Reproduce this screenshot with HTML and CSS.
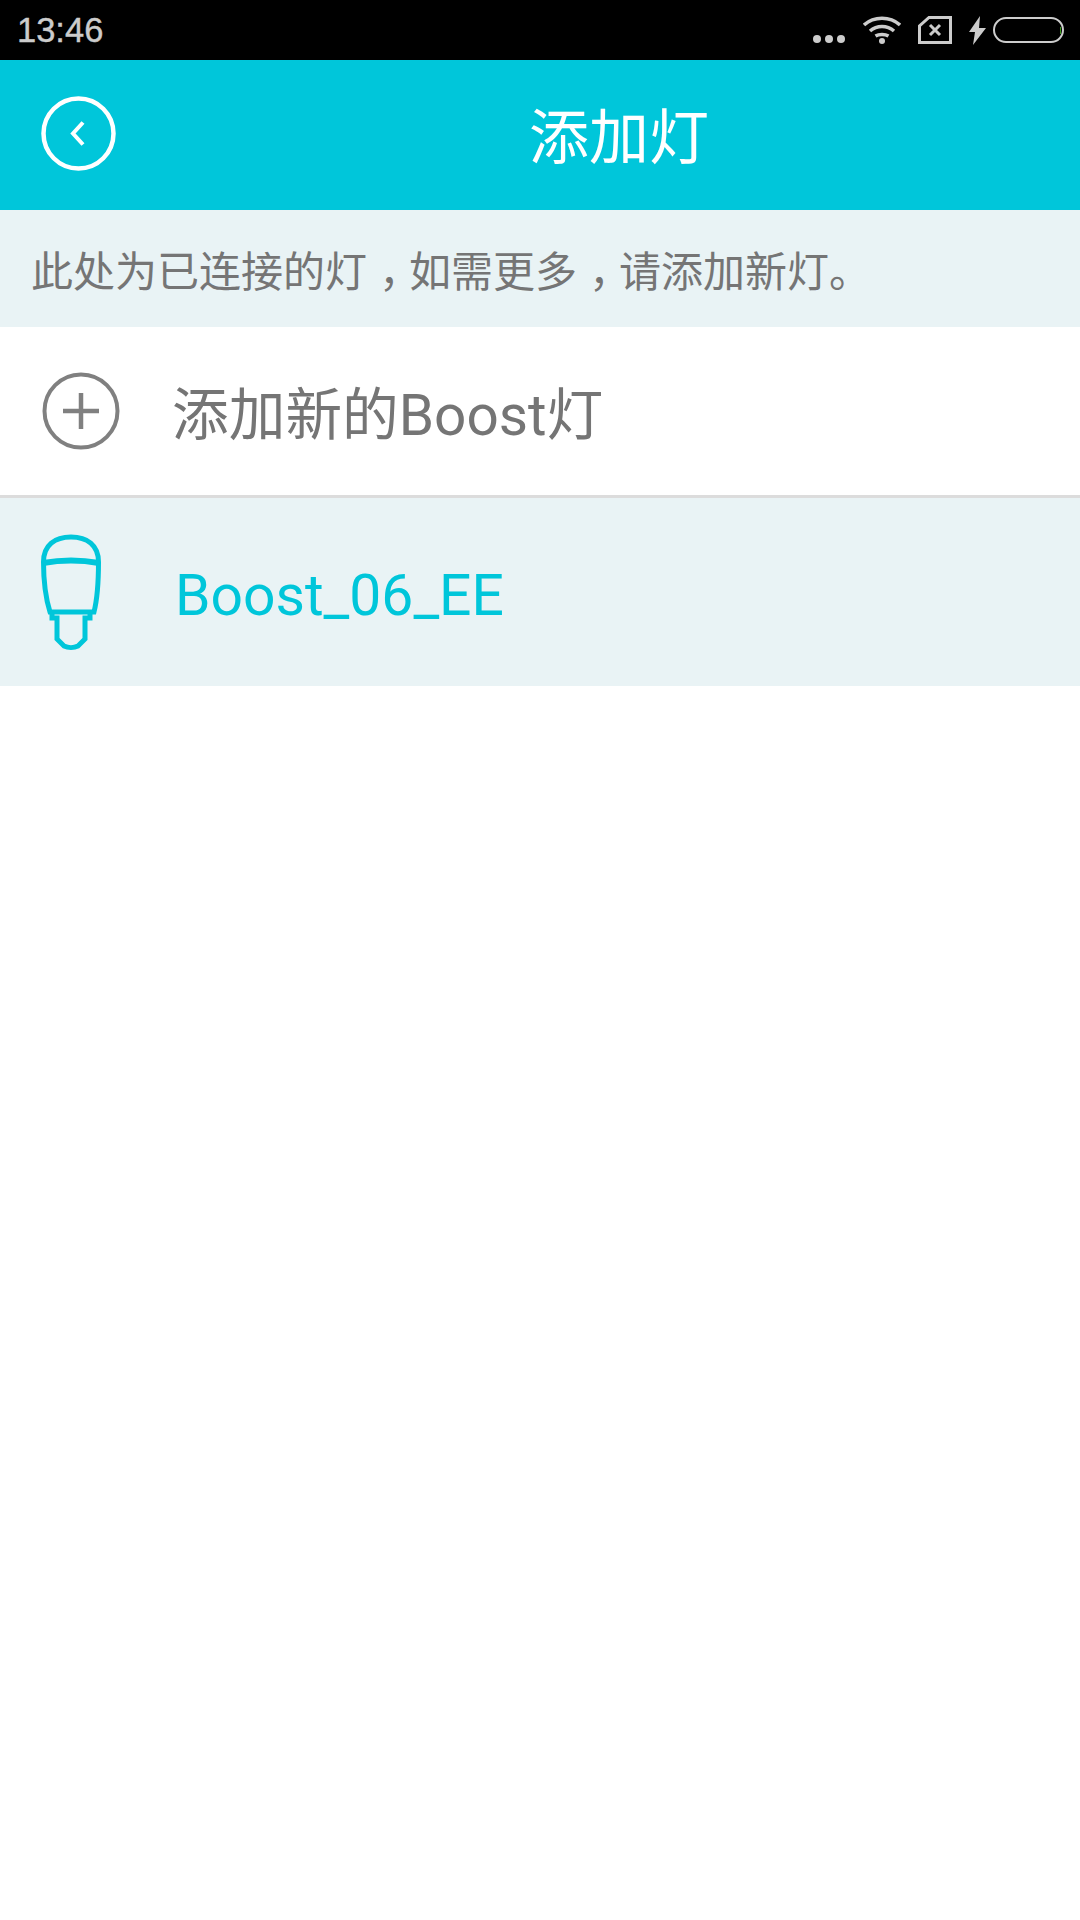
FILE: index.html
```html
<!DOCTYPE html>
<html lang="zh-CN">
<head>
    <meta charset="UTF-8">
    <meta name="viewport" content="width=device-width, initial-scale=1.0">
    <title>添加灯</title>
    <link rel="stylesheet" href="styles.css">
</head>
<body>
    <div class="status-bar">
        <span class="status-time">13:46</span>
        <div class="status-icons">
            <svg class="icon-dots" width="32" height="8" viewBox="0 0 32 8">
                <circle cx="4" cy="4" r="4"/><circle cx="16" cy="4" r="4"/><circle cx="28" cy="4" r="4"/>
            </svg>
            <svg class="icon-wifi" width="38" height="28" viewBox="0 0 38 28">
                <path d="M1 9C11 0 27 0 37 9M7 15C14 9 24 9 31 15M12.500 20C16 18 22 18 25.500 20" fill="none" stroke="#ccc" stroke-width="3.600"/>
                <circle cx="19" cy="25" r="3" fill="#ccc"/>
            </svg>
            <svg class="icon-sim" width="34" height="28" viewBox="0 0 34 28">
                <path d="M11 1.500H32.500V26.500H1.500V10Z" fill="none" stroke="#ccc" stroke-width="3"/>
                <path d="M12 9L22 19M22 9L12 19" fill="none" stroke="#ccc" stroke-width="3"/>
            </svg>
            <svg class="icon-bolt" width="17" height="29" viewBox="0 0 17 29">
                <path d="M11 0L0 16H6L4 29L17 12H10Z" fill="#ccc"/>
            </svg>
            <div class="battery"><div class="battery-level"></div></div>
        </div>
    </div>

    <header class="top-bar">
        <svg class="back-icon" width="75" height="75" viewBox="0 0 75 75">
            <circle cx="37.500" cy="37.500" r="35" fill="none" stroke="#fff" stroke-width="4.500"/>
            <path d="M42 26.500L32 37.500L42 48.500" fill="none" stroke="#fff" stroke-width="4"/>
        </svg>
        <h1 class="page-title">添加灯</h1>
    </header>

    <div class="hint">此处为已连接的灯<span class="comma">，</span>如需更多<span class="comma">，</span>请添加新灯。</div>

    <div class="row row-add">
        <svg class="plus-icon" width="78" height="78" viewBox="0 0 78 78">
            <circle cx="39" cy="39" r="36.500" fill="none" stroke="#808080" stroke-width="4"/>
            <path d="M39 21V57M21 39H57" fill="none" stroke="#808080" stroke-width="4.500"/>
        </svg>
        <span class="row-label">添加新的Boost灯</span>
    </div>

    <div class="row row-lamp">
        <svg class="lamp-icon" width="62" height="116" viewBox="0 0 62 116">
            <path d="M3.500 28C3.500 11 15 3 31 3C47 3 58.500 11 58.500 28C58.500 48 58 62 54 78L10 78C5 62 3.500 48 3.500 28Z" fill="none" stroke="#00c6da" stroke-width="5"/>
            <path d="M3 29C20 26 42 26 59 29" fill="none" stroke="#00c6da" stroke-width="6"/>
            <path d="M12 78V84H17V105L24 112C28 114 34 114 38 112L45 105V84H50V78" fill="none" stroke="#00c6da" stroke-width="5"/>
        </svg>
        <span class="row-label lamp-name">Boost_06_EE</span>
    </div>
</body>
</html>
```

FILE: styles.css
```css
body {
    margin: 0;
    background-color: #fff;
    font-family: Roboto, "Noto Sans CJK SC", sans-serif;
}
.status-bar {
    height: 60px;
    background-color: #000;
    display: flex;
    align-items: center;
    justify-content: space-between;
    padding: 0 16px 0 17px;
    box-sizing: border-box;
}
.status-time {
    font-family: "Liberation Sans", sans-serif;
    font-size: 34.5px;
    color: #ccc;
    -webkit-text-stroke: 0.4px #ccc;
}
.status-icons {
    display: flex;
    align-items: center;
}
.status-icons svg {
    display: block;
}
.icon-dots {
    fill: #ccc;
    margin: 18px 18px 0 0;
}
.icon-wifi {
    margin: 0 17px 0 0;
}
.icon-sim {
    margin: 0 17px 0 0;
}
.icon-bolt {
    margin: 0 7px 0 0;
}
.battery {
    width: 71px;
    height: 26px;
    box-sizing: border-box;
    border: 2px solid #ccc;
    border-radius: 13px;
    display: flex;
    align-items: center;
    justify-content: flex-end;
    padding-right: 1px;
}
.battery-level {
    width: 1px;
    height: 7px;
    background-color: #3c9c1e;
}
.top-bar {
    height: 150px;
    background-color: #00c6da;
    display: flex;
    align-items: center;
    padding-left: 41px;
}
.back-icon {
    flex: none;
    margin-bottom: 3px;
}
.page-title {
    margin: 0 0 6px 413px;
    font-size: 60px;
    font-weight: 400;
    color: #fff;
}
.hint {
    height: 117px;
    box-sizing: border-box;
    background-color: #e9f3f5;
    padding-left: 31px;
    display: flex;
    align-items: center;
    font-size: 42px;
    color: #757575;
}
/* the comma sits in the middle of its cell on the device */
.comma {
    font-feature-settings: "halt";
    padding: 0 9px 0 12px;
}
.row {
    display: flex;
    align-items: center;
}
.row-add {
    height: 168px;
    border-bottom: 3px solid #dcdcdc;
    padding-left: 42px;
}
.row-add .row-label {
    margin: 0 0 2px 52px;
    font-size: 56.7px;
    color: #757575;
}
.row-lamp {
    height: 188px;
    background-color: #e9f3f5;
    padding-left: 40px;
}
.row-label {
    font-size: 57px;
}
.lamp-name {
    margin: 7px 0 0 73px;
    color: #00c6da;
}
```
